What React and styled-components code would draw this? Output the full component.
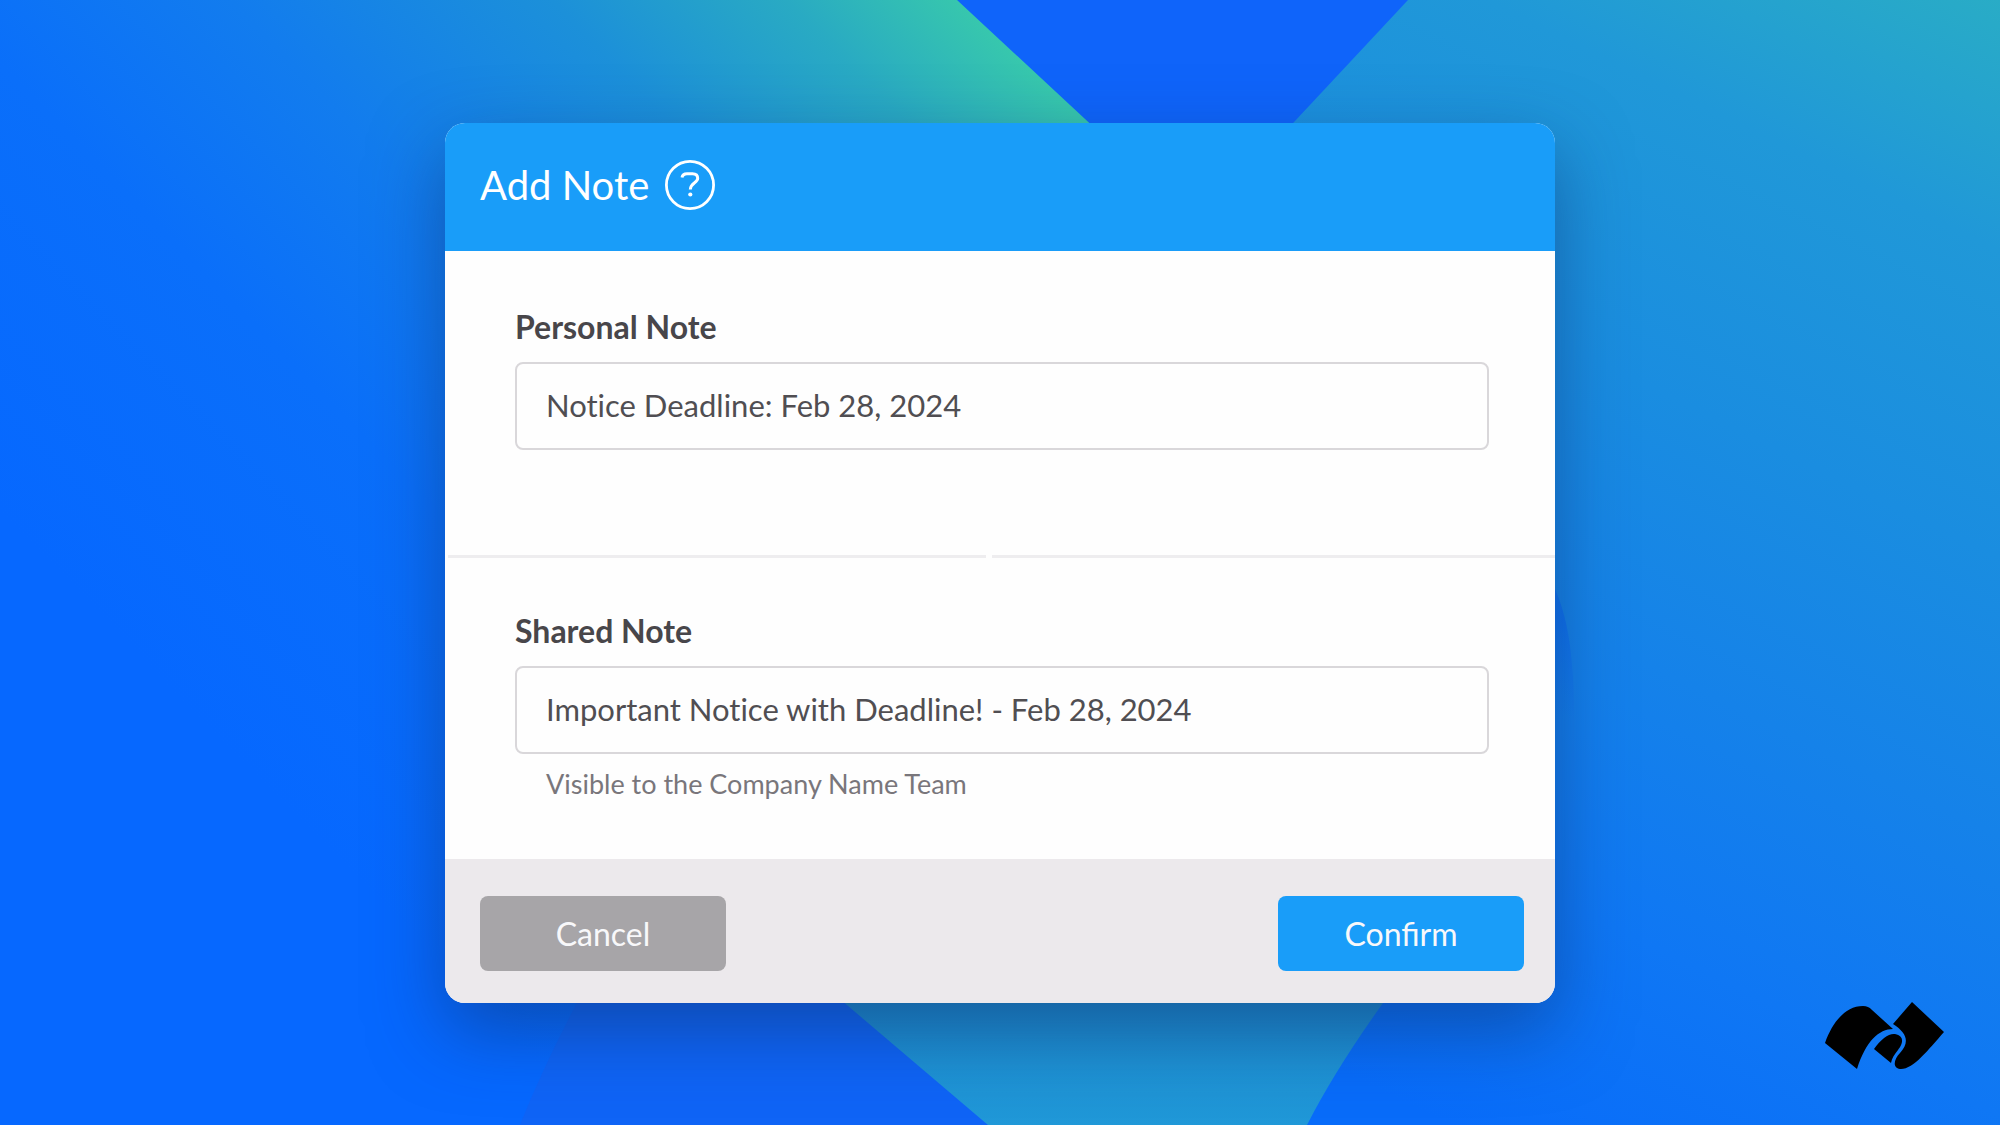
import React from "react";
import styled, { createGlobalStyle } from "styled-components";

const GlobalStyle = createGlobalStyle`
  * {
    box-sizing: border-box;
  }
  body {
    margin: 0;
    background: #0a66ff;
    font-family: Lato, "Open Sans", sans-serif;
  }
`;
const Page = styled.main`
  position: relative;
  display: flex;
  justify-content: center;
  align-items: center;
  min-height: 100vh;
  padding: 24px;
  overflow: hidden;
`;
const Backdrop = styled.svg`
  position: absolute;
  top: 0;
  left: 0;
  width: 100%;
  height: 100%;
`;
const Dialog = styled.form`
  position: relative;
  width: 100%;
  max-width: 1110px;
  overflow: hidden;
  border-radius: 20px;
  background: #fefefe;
  box-shadow: 0 28px 72px rgba(14, 50, 110, 0.5);
`;
const Header = styled.header`
  display: flex;
  align-items: center;
  gap: 16px;
  height: 128px;
  padding: 0 35px 4px;
  background: #199df9;
  color: #fff;
`;
const Title = styled.h1`
  margin: 0;
  font-size: 40px;
  line-height: 48px;
  font-weight: 400;
`;
const HelpButton = styled.button`
  width: 50px;
  height: 50px;
  padding: 0;
  border: 0;
  background: none;
  color: inherit;
  cursor: pointer;
  & svg {
    display: block;
  }
`;
const Section = styled.section`
  display: flex;
  flex-direction: column;
  height: 304px;
  padding: 56px 66px 0 70px;
`;
const Divider = styled.div`
  display: flex;
  gap: 6px;
  height: 3px;
  margin-bottom: -3px;
  padding-left: 3px;
  & span {
    flex: 565;
    background: #eeedef;
  }
  & span:first-child {
    flex: 540;
  }
`;
const Label = styled.label`
  margin-bottom: 15px;
  color: #48464a;
  font-size: 32px;
  line-height: 40px;
  font-weight: 700;
`;
const TextInput = styled.input`
  width: 100%;
  height: 88px;
  padding: 0 29px 2px;
  border: 2px solid #d9d7da;
  border-radius: 8px;
  outline: none;
  background: #fefefe;
  color: #504e52;
  font-family: inherit;
  font-size: 31px;
  font-variant-ligatures: none;
`;
const Hint = styled.p`
  margin: 14px 31px 0;
  color: #79767b;
  font-size: 27px;
  line-height: 32px;
`;
const Footer = styled.footer`
  display: flex;
  justify-content: space-between;
  height: 144px;
  padding: 37px 31px 0 35px;
  background: #ece9ec;
`;
const Button = styled.button`
  width: 246px;
  height: 75px;
  border: 0;
  border-radius: 8px;
  background: ${(props) => (props.$primary ? "#199df9" : "#a7a5a8")};
  color: #f8f8fa;
  font-family: inherit;
  font-size: 32px;
  cursor: pointer;
`;
const Logo = styled.svg`
  position: absolute;
  right: 55px;
  bottom: 55px;
  width: 120px;
  height: 69px;
`;

const notes = [
  {
    id: "personal-note",
    label: "Personal Note",
    value: "Notice Deadline: Feb 28, 2024",
  },
  {
    id: "shared-note",
    label: "Shared Note",
    value: "Important Notice with Deadline! - Feb 28, 2024",
    hint: "Visible to the Company Name Team",
  },
];

const BackdropArt = () => (
  <Backdrop viewBox="0 0 2000 1125" preserveAspectRatio="none" aria-hidden="true">
    <defs>
      <linearGradient id="left" gradientUnits="userSpaceOnUse" x1="240" y1="760" x2="990" y2="30">
        <stop offset="0" stopColor="#0668ff" />
        <stop offset="0.3" stopColor="#0a6ffa" />
        <stop offset="0.5" stopColor="#127cee" />
        <stop offset="0.72" stopColor="#1c90d9" />
        <stop offset="0.88" stopColor="#29aac3" />
        <stop offset="1" stopColor="#37c7ad" />
      </linearGradient>
      <linearGradient id="right" gradientUnits="userSpaceOnUse" x1="1450" y1="1125" x2="2000" y2="0">
        <stop offset="0" stopColor="#086cfa" />
        <stop offset="0.2" stopColor="#0f77f4" />
        <stop offset="0.4" stopColor="#1582e9" />
        <stop offset="0.6" stopColor="#1a8de0" />
        <stop offset="0.82" stopColor="#2098d8" />
        <stop offset="1" stopColor="#29acc6" />
      </linearGradient>
      <linearGradient id="bottom" gradientUnits="userSpaceOnUse" x1="0" y1="1000" x2="0" y2="1125">
        <stop offset="0" stopColor="#1c8cd0" />
        <stop offset="1" stopColor="#2098d8" />
      </linearGradient>
      <linearGradient id="fold" gradientUnits="userSpaceOnUse" x1="0" y1="620" x2="0" y2="720">
        <stop offset="0" stopColor="#0a68f4" stopOpacity="0.6" />
        <stop offset="1" stopColor="#0a68f4" stopOpacity="0" />
      </linearGradient>
    </defs>
    <rect width="2000" height="1125" fill="#0f64fa" />
    <path d="M0 0H957L1200 226L600 960Q550 1050 520 1125H0Z" fill="url(#left)" />
    <path d="M1408 0H2000V1125H1150V276Z" fill="url(#right)" />
    <path d="M1540 560C1565 600 1574 640 1574 720H1540Z" fill="url(#fold)" />
    <path d="M520 1125Q550 1050 600 960L700 880L988 1125Z" fill="#0f64f6" />
    <path d="M700 880H1450L1383 1003Q1335 1070 1307 1125H988Z" fill="url(#bottom)" />
  </Backdrop>
);

const BrandLogo = () => (
  <Logo viewBox="0 0 120 69" role="img" aria-label="Company logo">
    <path d="M0 42C7 22 20 5 38 5C42 5 44 6 47 9L68 28C54 28 41 40 32 68Z" />
    <path d="M49 48C56 38 64 32 70 33C80 35 78 43 73 49C69 54 67 57 66 62Z" />
    <path d="M68 23L87 1L119 31C103 49 88 69 75 68C67 67 69 58 75 52C85 41 82 32 68 23Z" />
  </Logo>
);

const NoteField = ({ id, label, value, hint }) => (
  <Section>
    <Label htmlFor={id}>{label}</Label>
    <TextInput
      id={id}
      type="text"
      defaultValue={value}
      aria-describedby={hint ? `${id}-hint` : undefined}
    />
    {hint && <Hint id={`${id}-hint`}>{hint}</Hint>}
  </Section>
);

const App = () => (
  <>
    <GlobalStyle />
    <Page>
      <BackdropArt />
      <Dialog onSubmit={(e) => e.preventDefault()}>
        <Header>
          <Title>Add Note</Title>
          <HelpButton type="button" aria-label="Help">
            <svg width="50" height="50" viewBox="0 0 50 50" fill="none" stroke="currentColor">
              <circle cx="25" cy="25" r="23.6" strokeWidth="2.8" />
              <path
                d="M17 17.5C17.5 14.5 19.5 13.7 22 13.7H27.5C31 13.7 32.7 15.8 32.7 18.3C32.7 23 25.5 22.5 25.3 29.5"
                strokeWidth="3"
              />
              <circle cx="25.3" cy="34.5" r="2.1" fill="currentColor" stroke="none" />
            </svg>
          </HelpButton>
        </Header>
        <NoteField {...notes[0]} />
        <Divider>
          <span />
          <span />
        </Divider>
        <NoteField {...notes[1]} />
        <Footer>
          <Button type="button">Cancel</Button>
          <Button type="submit" $primary>
            Confirm
          </Button>
        </Footer>
      </Dialog>
      <BrandLogo />
    </Page>
  </>
);

export default App;
